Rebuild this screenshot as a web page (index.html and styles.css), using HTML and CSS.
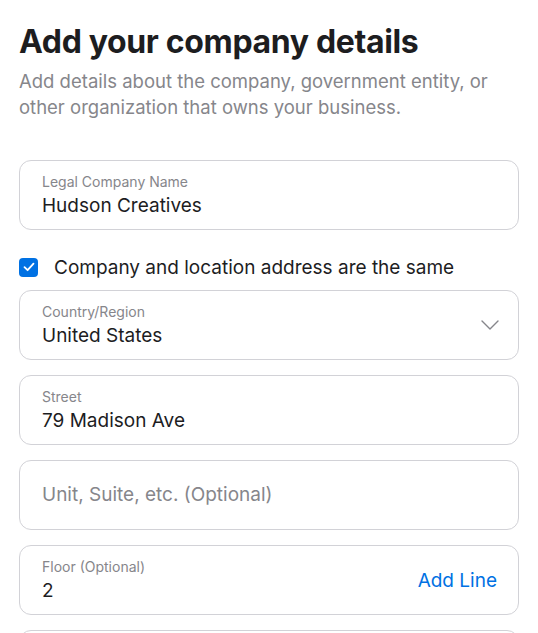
FILE: index.html
```html
<!DOCTYPE html>
<html lang="en">
<head>
<meta charset="utf-8">
<title>Add your company details</title>
<link rel="stylesheet" href="styles.css">
</head>
<body>
<main class="page">
  <h1 class="title">Add your company details</h1>
  <p class="subtitle">Add details about the company, government entity, or other organization that owns your business.</p>

  <div class="form">
    <div class="field">
      <div class="field-body">
        <span class="label">Legal Company Name</span>
        <span class="value">Hudson Creatives</span>
      </div>
    </div>

    <label class="check-row">
      <span class="checkbox">
        <svg width="12" height="10" viewBox="0 0 12 10"><path d="M1.5 5.2 L4.6 8.2 L10.5 1.6" fill="none" stroke="#fff" stroke-width="1.8" stroke-linecap="round" stroke-linejoin="round"/></svg>
      </span>
      <span class="check-text">Company and location address are the same</span>
    </label>

    <div class="stack">
      <div class="field">
        <div class="field-body">
          <span class="label">Country/Region</span>
          <span class="value">United States</span>
        </div>
        <svg class="chevron" width="18" height="10" viewBox="0 0 18 10"><path d="M1 1 L9 9 L17 1" fill="none" stroke="#86868b" stroke-width="1.4" stroke-linecap="round" stroke-linejoin="round"/></svg>
      </div>

      <div class="field">
        <div class="field-body">
          <span class="label">Street</span>
          <span class="value">79 Madison Ave</span>
        </div>
      </div>

      <div class="field">
        <div class="field-body">
          <span class="placeholder">Unit, Suite, etc. (Optional)</span>
        </div>
      </div>

      <div class="field">
        <div class="field-body">
          <span class="label">Floor (Optional)</span>
          <span class="value">2</span>
        </div>
        <span class="add-line">Add Line</span>
      </div>

      <div class="field"></div>
    </div>
  </div>
</main>
</body>
</html>
```

FILE: styles.css
```css
* { box-sizing: border-box; }
html, body { margin: 0; padding: 0; background: #fff; }
body {
  font-family: Inter, "Noto Sans", sans-serif;
  color: #1d1d1f;
  overflow: hidden;
  height: 633px;
}
.page {
  padding: 22px 19px 0 19px;
  width: 538px;
}
.title {
  margin: 0;
  font-size: 32px;
  line-height: 40px;
  font-weight: 700;
  letter-spacing: -0.35px;
  color: #1d1d1f;
}
.subtitle {
  margin: 6px 0 0 0;
  font-size: 18.5px;
  line-height: 26px;
  color: #86868b;
  font-weight: 400;
}
.form {
  margin-top: 40px;
  width: 500px;
}
.field {
  height: 70px;
  border: 1px solid #d2d2d7;
  border-radius: 12px;
  display: flex;
  align-items: center;
  padding: 0 21px 0 22px;
  flex: none;
}
.field-body {
  flex: 1;
  display: flex;
  flex-direction: column;
}
.label {
  font-size: 14px;
  line-height: 18px;
  color: #86868b;
}
.value {
  font-size: 19px;
  line-height: 24px;
  color: #1d1d1f;
  margin-top: 3px;
}
.placeholder {
  font-size: 19px;
  line-height: 24px;
  color: #86868b;
}
.chevron { flex: none; margin-right: -2px; }
.add-line {
  font-size: 19px;
  color: #0071e3;
}
.check-row {
  display: flex;
  align-items: center;
  gap: 16px;
  height: 30px;
  margin: 22px 0 0 0;
}
.checkbox {
  width: 19px;
  height: 19px;
  border-radius: 4px;
  background: #0071e3;
  display: flex;
  align-items: center;
  justify-content: center;
  flex: none;
}
.check-text {
  font-size: 19px;
  color: #1d1d1f;
}
.stack {
  margin-top: 8px;
  display: flex;
  flex-direction: column;
  gap: 15px;
}
```
